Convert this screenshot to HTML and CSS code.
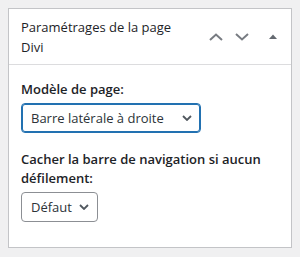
FILE: index.html
```html
<!DOCTYPE html>
<html lang="fr">
<head>
    <meta charset="UTF-8">
    <title>Paramétrages de la page Divi</title>
    <link rel="stylesheet" href="styles.css">
</head>
<body>
  <div class="postbox">
    <div class="postbox-header">
      <h2 class="hndle">Paramétrages de la page Divi</h2>
      <div class="handle-actions">
        <button type="button" class="handle-btn" aria-label="Monter">
          <svg width="14" height="8" viewBox="0 0 14 8"><path d="M1 7 L7 1.5 L13 7" fill="none" stroke="currentColor" stroke-width="2"/></svg>
        </button>
        <button type="button" class="handle-btn" aria-label="Descendre">
          <svg width="14" height="8" viewBox="0 0 14 8"><path d="M1 1 L7 6.5 L13 1" fill="none" stroke="currentColor" stroke-width="2"/></svg>
        </button>
        <button type="button" class="handle-btn toggle" aria-label="Replier">
          <svg width="8" height="6" viewBox="0 0 8 6"><path d="M0 5 L4 0.5 L8 5 Z" fill="currentColor"/></svg>
        </button>
      </div>
    </div>
    <div class="inside">
      <p class="field-label first"><label for="page-layout">Modèle de page:</label></p>
      <div class="select-wrap wide focused">
        <select id="page-layout" class="field-select">
          <option>Barre latérale à droite</option>
        </select>
        <svg class="select-arrow" width="10" height="6" viewBox="0 0 10 6"><path d="M1 1 L5 5 L9 1" fill="none" stroke="currentColor" stroke-width="1.8"/></svg>
      </div>
      <p class="field-label"><label for="nav-hide">Cacher la barre de navigation si aucun défilement:</label></p>
      <div class="select-wrap narrow">
        <select id="nav-hide" class="field-select">
          <option>Défaut</option>
        </select>
        <svg class="select-arrow" width="10" height="6" viewBox="0 0 10 6"><path d="M1 1 L5 5 L9 1" fill="none" stroke="currentColor" stroke-width="1.8"/></svg>
      </div>
    </div>
  </div>
</body>
</html>
```

FILE: styles.css
```css
body {
    margin: 8px;
    background-color: #f0f0f1;
    font-family: "Open Sans", sans-serif;
    color: #1d2327;
}
.postbox {
    background-color: #fff;
    border: 1px solid #c3c4c7;
    box-shadow: 0 1px 1px rgba(0, 0, 0, 0.04);
    box-sizing: border-box;
    height: 240px;
}
.postbox-header {
    display: flex;
    align-items: center;
    border-bottom: 1px solid #dcdcde;
}
.hndle {
    flex: 1;
    margin: 0;
    padding: 8px 12px 7px;
    font-size: 13px;
    font-weight: 400;
    line-height: 20px;
}
.handle-actions {
    display: flex;
    align-items: center;
}
.handle-btn {
    width: 26px;
    height: 36px;
    padding: 0;
    border: none;
    background: transparent;
    color: #787c82;
    display: flex;
    align-items: center;
    justify-content: center;
}
.handle-btn.toggle {
    width: 36px;
    color: #646970;
}
.inside {
    padding: 0 12px;
}
.field-label {
    margin: 17px 0 4px;
    font-size: 13px;
    font-weight: 600;
    line-height: 19px;
}
.field-label.first {
    margin-top: 15px;
}
.select-wrap {
    position: relative;
    color: #50575e;
}
.select-wrap.wide {
    width: 180px;
}
.select-wrap.narrow {
    width: 77px;
}
.field-select {
    display: block;
    width: 100%;
    box-sizing: border-box;
    font-family: "Open Sans", sans-serif;
    font-size: 13px;
    color: #2c3338;
    height: 30px;
    padding: 0 24px 0 9px;
    border: 1px solid #8c8f94;
    border-radius: 4px;
    background: #fff;
    -webkit-appearance: none;
    appearance: none;
}
.select-wrap.focused .field-select {
    border-color: #2271b1;
    box-shadow: inset 0 0 0 1px #2271b1;
    outline: none;
}
.select-arrow {
    position: absolute;
    right: 9px;
    top: 12px;
    pointer-events: none;
}
```
